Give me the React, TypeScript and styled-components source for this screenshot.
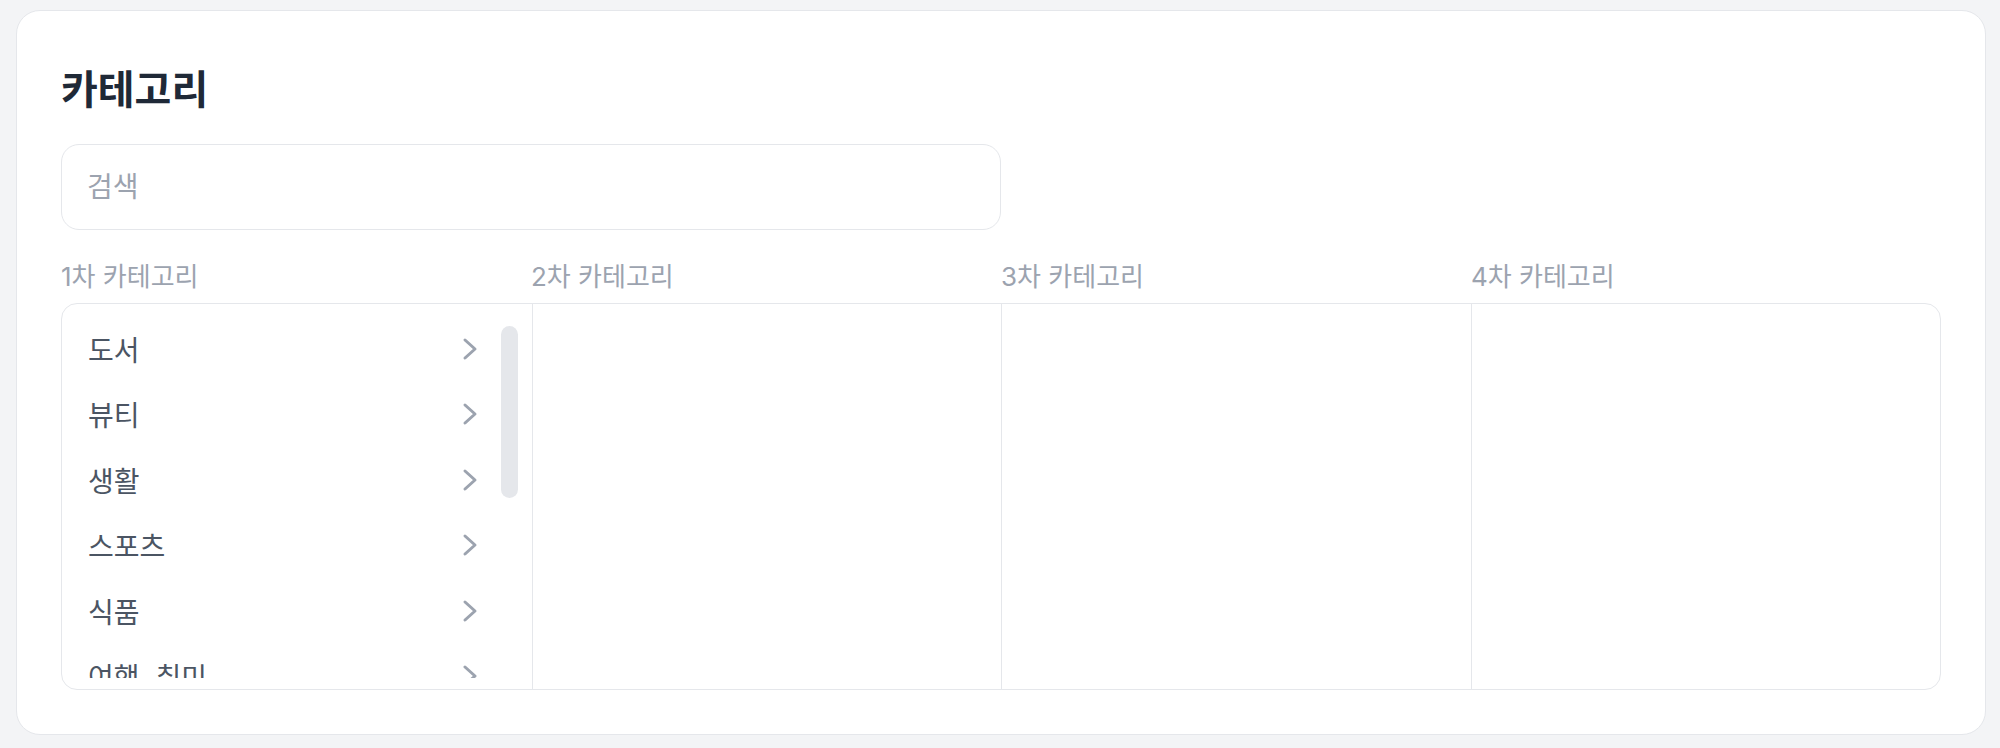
import React from "react";
import styled, { createGlobalStyle } from "styled-components";

const GlobalStyle = createGlobalStyle`
  * { box-sizing: border-box; }
  html, body {
    margin: 0;
    padding: 0;
    background: #f3f4f6;
  }
  body {
    font-family: Inter, "Noto Sans CJK KR", sans-serif;
  }
`;

const Page = styled.div`
  padding: 10px 14px 13px 16px;
`;

const Card = styled.section`
  height: 725px;
  background: #ffffff;
  border: 1px solid #e5e7eb;
  border-radius: 24px;
  padding: 51px 44px 44px;
  display: flex;
  flex-direction: column;
`;

const Title = styled.h1`
  margin: 0 0 26px;
  font-size: 40px;
  line-height: 56px;
  font-weight: 700;
  color: #1f2937;
`;

const SearchInput = styled.input`
  width: 50%;
  height: 86px;
  flex: none;
  border: 1px solid #e5e7eb;
  border-radius: 18px;
  padding: 0 25px;
  font-size: 28px;
  font-family: inherit;
  color: #374151;
  background: #fff;
  outline: none;
  &::placeholder {
    color: #9ca3af;
  }
`;

const LabelRow = styled.div`
  display: grid;
  grid-template-columns: repeat(4, 1fr);
  margin: 30px 0 9px;
`;

const Label = styled.span`
  font-size: 26px;
  line-height: 34px;
  color: #9ca3af;
`;

const Board = styled.div`
  flex: 1;
  min-height: 0;
  display: grid;
  grid-template-columns: repeat(4, 1fr);
  border: 1px solid #e5e7eb;
  border-radius: 16px;
  overflow: hidden;
`;

const Column = styled.div`
  min-height: 0;
  border-left: 1px solid #e5e7eb;
  &:first-child {
    border-left: none;
  }
`;

const ListColumn = styled(Column)`
  display: flex;
  padding: 12px 14px 11px 0;
`;

const List = styled.ul`
  flex: 1;
  min-width: 0;
  margin: 0;
  padding: 0;
  list-style: none;
  overflow: hidden;
`;

const ScrollTrack = styled.div`
  width: 17px;
  flex: none;
  padding: 10px 0;
`;

const ScrollThumb = styled.div`
  width: 100%;
  border-radius: 9px;
  background: #e5e7eb;
`;

const Item = styled.li`
  height: 65.5px;
  display: flex;
  align-items: center;
  justify-content: space-between;
  padding: 0 23px 0 26px;
  font-size: 28px;
  color: #4b5563;
  white-space: nowrap;
  cursor: pointer;
`;

const Chevron = () => (
  <svg width="16" height="24" viewBox="0 0 16 24" fill="none" aria-hidden="true">
    <polyline
      points="3,3 13,12 3,21"
      stroke="#9ca3af"
      strokeWidth="3"
      strokeLinecap="round"
      strokeLinejoin="round"
    />
  </svg>
);

const levels = ["1차 카테고리", "2차 카테고리", "3차 카테고리", "4차 카테고리"];

const firstLevel = [
  "도서",
  "뷰티",
  "생활",
  "스포츠",
  "식품",
  "여행, 취미",
  "가전",
  "디지털",
  "패션",
  "가구/인테리어",
  "출산/육아",
];

const VIEW_HEIGHT = 362;
const TRACK_HEIGHT = 342;
const ITEM_HEIGHT = 65.5;

export default function App() {
  const thumbHeight = Math.round(
    (TRACK_HEIGHT * VIEW_HEIGHT) / (firstLevel.length * ITEM_HEIGHT)
  );
  return (
    <>
      <GlobalStyle />
      <Page>
        <Card>
          <Title>카테고리</Title>
          <SearchInput type="text" placeholder="검색" />
          <LabelRow>
            {levels.map((l) => (
              <Label key={l}>{l}</Label>
            ))}
          </LabelRow>
          <Board>
            <ListColumn>
              <List>
                {firstLevel.map((name) => (
                  <Item key={name}>
                    <span>{name}</span>
                    <Chevron />
                  </Item>
                ))}
              </List>
              <ScrollTrack>
                <ScrollThumb style={{ height: thumbHeight }} />
              </ScrollTrack>
            </ListColumn>
            <Column />
            <Column />
            <Column />
          </Board>
        </Card>
      </Page>
    </>
  );
}
